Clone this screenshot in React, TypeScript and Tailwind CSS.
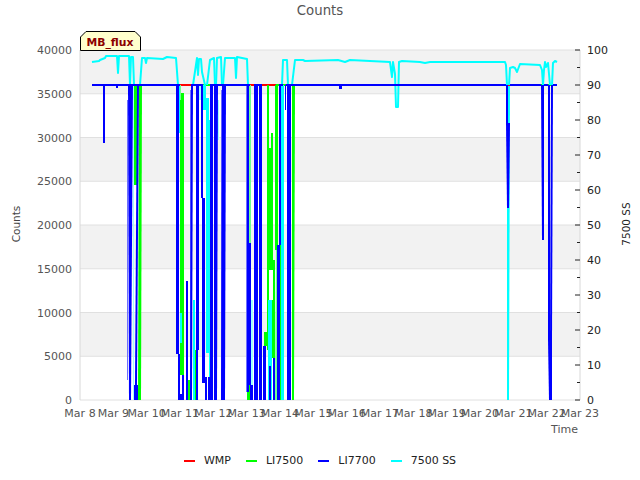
const FONT = '"DejaVu Sans", sans-serif';

const leftTicks = [0, 5000, 10000, 15000, 20000, 25000, 30000, 35000, 40000];
const rightTicks = [0, 10, 20, 30, 40, 50, 60, 70, 80, 90, 100];
const days = [8, 9, 10, 11, 12, 13, 14, 15, 16, 17, 18, 19, 20, 21, 22, 23];
const bands = [50, 137.5, 225, 312.5];

const R = '#ff0000';
const G = '#00ff00';
const B = '#0000ff';
const C = '#00ffff';
const PB = '#7070ff'; // faded edge of a blue drop
const PC = '#a0ffff';
const PG = '#70ff90';

// x0, x1, top, bottom, colour, x0 and x1 at the bottom when it tapers
type Seg = [number, number, number, number, string, number?, number?];

const segs: Seg[] = [
  // flat tops
  [92, 557, 84, 86, R],
  [92, 180, 84, 86, G],
  [191, 250, 84, 86, G],
  [276, 279, 84, 86, G],
  [283, 507, 84, 86, G],
  [510, 557, 84, 86, G],

  // green drops
  [134, 137, 85, 185, G],
  [139, 142, 85, 400, G, 138, 141],
  [180, 184, 93, 375, G],
  [179, 181, 85, 100, PG],
  [188, 190, 380, 400, G],
  [193, 198, 350, 400, G],
  [210, 212, 380, 400, G],
  [247, 250, 385, 400, G],
  [249, 251, 85, 243, PG],
  [259, 261, 376, 400, G],
  [264, 267, 332, 346, G],
  [267, 269, 85, 350, G],
  [268, 273, 148, 270, G],
  [271, 273, 133, 150, G],
  [273, 275, 260, 360, G],
  [272, 275, 300, 358, G],
  [275, 278, 85, 250, G],
  [276, 279, 250, 400, PG, 275, 277],
  [280, 282, 85, 400, G],
  [292, 295, 85, 400, G, 292, 294],

  // cyan drops
  [133, 134, 86, 400, PC],
  [177, 180, 85, 133, C],
  [180, 182, 313, 343, C],
  [193, 195, 300, 400, C],
  [203, 206, 85, 110, C],
  [206, 209, 98, 353, C],
  [209, 211, 120, 400, C],
  [198, 201, 86, 100, PC],
  [251, 253, 300, 400, PC],
  [268, 272, 300, 400, C],
  [281, 284, 85, 400, C],
  [217, 219, 100, 140, PC],
  [507, 510, 86, 400, C, 507, 509],

  // blue drops
  [103, 105, 85, 143, B],
  [116, 118, 85, 88, B],
  [128, 133, 85, 400, B, 129, 131],
  [127, 128, 100, 380, PB],
  [137, 139, 85, 385, B, 135, 137],
  [134, 138, 385, 400, B],
  [176, 179, 85, 354, B],
  [178, 180, 354, 400, B],
  [180, 184, 394, 400, B],
  [182, 184, 375, 400, B],
  [186, 188, 281, 400, B],
  [190, 191, 90, 400, PB],
  [191, 193, 85, 400, B, 190, 192],
  [196, 199, 85, 350, B],
  [196, 198, 350, 400, B],
  [201, 203, 85, 198, B],
  [202, 205, 198, 383, B],
  [205, 207, 377, 400, B],
  [208, 210, 377, 400, B],
  [210, 213, 85, 400, B],
  [214, 218, 85, 400, B, 214, 217],
  [221, 222, 90, 400, PB],
  [222, 226, 85, 400, B, 221, 225],
  [246, 247, 85, 392, PB],
  [247, 249, 85, 392, B],
  [250, 253, 385, 400, B],
  [249, 251, 243, 385, B],
  [254, 258, 85, 400, B],
  [259, 262, 85, 400, B],
  [263, 266, 346, 400, B],
  [269, 271, 366, 400, B],
  [273, 275, 358, 400, B],
  [277, 280, 245, 400, B],
  [279, 281, 85, 245, B],
  [285, 286, 85, 110, B],
  [287, 291, 85, 400, B],
  [339, 342, 85, 89, B],
  [506, 508, 85, 123, B],
  [506, 510, 123, 208, B, 507, 509],
  [541, 544, 85, 240, B, 542, 544],
  [548, 550, 85, 340, B, 548, 550],
  [551, 553, 85, 340, B, 550, 552],
  [548, 552, 340, 400, B, 549, 552],

  // blue flat tops
  [92, 180, 84, 86, B],
  [191, 203, 84, 86, B],
  [210, 250, 84, 86, B],
  [254, 262, 84, 86, B],
  [279, 283, 84, 86, B],
  [286, 506, 84, 86, B],
  [510, 541, 84, 86, B],
  [544, 548, 84, 86, B],
  [553, 557, 84, 86, B],
];

// stretches of the 7500 SS line above the 35000 level
const cyanTops = [
  '92,62 99,61 100,60 105,58 106,56 117,56 118,73 119,56 129,56 130,85 131,57 133,57 134,85',
  '140,85 142,58 145,58 146,63 147,58 163,59 167,57 176,58 178,85',
  '193,85 197,58 198,75 199,59 201,59 202,72 205,85',
  '207,85 210,60 214,58 215,85',
  '216,85 217,58 221,57 222,85',
  '223,85 225,58 235,58 236,78 237,57 247,59 248,85',
  '282,85 283,60 287,60 288,85',
  `292,85 295,60 303,60 305,61 338,60 345,62 350,60 370,61 390,62 392,77 393,62 395,74 396,107 398,107
   399,62 402,61 420,62 425,63 430,62 505,62 506,65 507,85`,
  '509,85 510,68 513,67 515,68 517,72 520,64 540,65 542,70 543,85 544,70 545,62 546,67 548,63 550,85',
  '552,85 553,63 555,61 557,62',
];

const legend = [
  { name: 'WMP', color: 'bg-[#ff0000]' },
  { name: 'LI7500', color: 'bg-[#00ff00]' },
  { name: 'LI7700', color: 'bg-[#0000ff]' },
  { name: '7500 SS', color: 'bg-[#00ffff]' },
];

function Drop({ seg }: { seg: Seg }) {
  const [x0, x1, top, bottom, color, bx0 = x0, bx1 = x1] = seg;
  return <polygon points={`${x0},${top} ${x1},${top} ${bx1},${bottom} ${bx0},${bottom}`} fill={color} />;
}

function Chart() {
  // blue sits above the cyan line, the rest below it
  const firstBlue = segs.findIndex((s) => s[4] === B);
  return (
    <svg width={640} height={420} viewBox="0 22 640 420" className="block" fontFamily={FONT}>
      {bands.map((y) => (
        <rect key={y} x={80} y={y} width={500} height={43.75} fill="#f2f2f2" />
      ))}
      {leftTicks.map((t) => {
        const y = 400 - (t / 40000) * 350;
        return <line key={t} x1={80} x2={580} y1={y} y2={y} stroke="#e0e0e0" strokeWidth={1} />;
      })}
      <line x1={80} x2={80} y1={50} y2={400} stroke="#d8d8d8" />
      <line x1={580} x2={580} y1={50} y2={400} stroke="#d8d8d8" />

      {segs.slice(0, firstBlue).map((s, i) => (
        <Drop key={i} seg={s} />
      ))}
      {cyanTops.map((p, i) => (
        <polyline key={i} points={p} fill="none" stroke={C} strokeWidth={2} strokeLinejoin="round" />
      ))}
      {segs.slice(firstBlue).map((s, i) => (
        <Drop key={i} seg={s} />
      ))}

      {rightTicks.map((t) => {
        const y = 400 - (t / 100) * 350;
        return <line key={t} x1={575} x2={580} y1={y} y2={y} stroke="#222" />;
      })}
      {rightTicks.slice(0, -1).map((t) => {
        const y = 400 - ((t + 5) / 100) * 350;
        return <line key={t} x1={577} x2={580} y1={y} y2={y} stroke="#222" />;
      })}

      <g fontSize={11} fill="#555">
        {leftTicks.map((t) => (
          <text key={t} x={72} y={404 - (t / 40000) * 350} textAnchor="end">
            {t}
          </text>
        ))}
        {days.map((d, i) => (
          <text key={d} x={80 + i * 33.33} y={417} textAnchor="middle">
            Mar {d}
          </text>
        ))}
        <text x={578} y={433} textAnchor="end">
          Time
        </text>
      </g>
      <g fontSize={11} fill="#222">
        {rightTicks.map((t) => (
          <text key={t} x={587} y={404 - (t / 100) * 350}>
            {t}
          </text>
        ))}
      </g>
      <text x={20} y={224} fontSize={10.5} fill="#444" textAnchor="middle" transform="rotate(-90 20 224)">
        Counts
      </text>
      <text x={630} y={224} fontSize={10.5} fill="#222" textAnchor="middle" transform="rotate(-90 630 224)">
        7500 SS
      </text>

      <polygon points="80.5,50.5 80.5,37 86,31.5 135,31.5 140.5,37 140.5,50.5" fill="#ffffcc" stroke="#000" />
      <text x={110} y={46} fontSize={10.8} fontWeight={700} fill="#8b0000" textAnchor="middle">
        MB_flux
      </text>
    </svg>
  );
}

export default function App() {
  return (
    <div className="flex h-[480px] w-[640px] flex-col bg-white" style={{ fontFamily: FONT }}>
      <div className="h-[22px] pt-[3px] text-center text-[13.3px] leading-4 text-[#555]">Counts</div>
      <Chart />
      <div className="flex items-center justify-center gap-[15px] pt-[10px] text-[11px] leading-[18px] text-[#222]">
        {legend.map((l) => (
          <div key={l.name} className="flex items-center gap-[9px]">
            <span className={`h-[2px] w-[11px] ${l.color}`} />
            <span>{l.name}</span>
          </div>
        ))}
      </div>
    </div>
  );
}
